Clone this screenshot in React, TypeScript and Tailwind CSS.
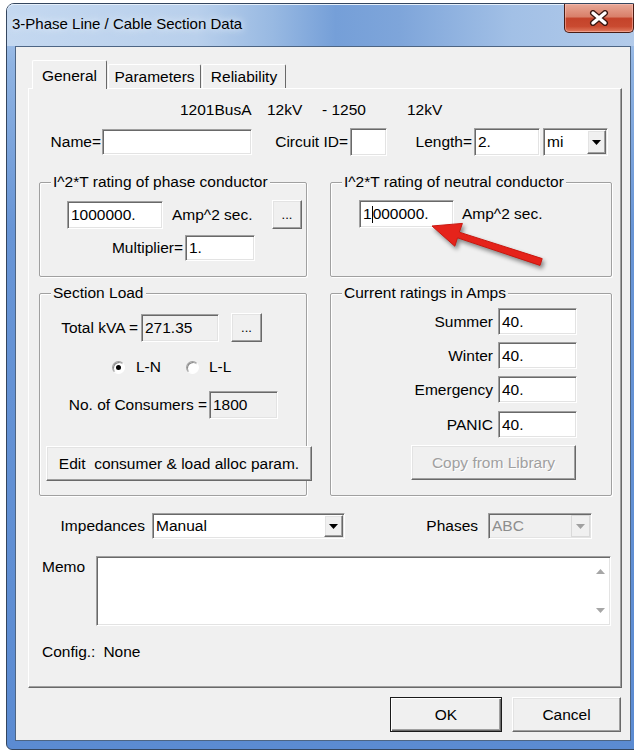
import React from "react";

// classic win32 control bevels
const sunken =
  "border border-t-[#a0a0a0] border-l-[#a0a0a0] border-r-white border-b-white shadow-[inset_1px_1px_0_#696969,inset_-1px_-1px_0_#e3e3e3]";
const raised =
  "border border-t-white border-l-white border-r-[#696969] border-b-[#696969] shadow-[inset_-1px_-1px_0_#a0a0a0,inset_1px_1px_0_#e3e3e3] bg-[#f0f0f0]";

type FieldProps = { className?: string; gray?: boolean; children?: React.ReactNode };

function Field({ className = "", gray = false, children }: FieldProps) {
  return (
    <div
      className={`${sunken} ${gray ? "bg-[#f0f0f0]" : "bg-white"} flex items-center pl-[3px] whitespace-nowrap ${className}`}
    >
      {children}
    </div>
  );
}

function Arrow({ disabled = false }: { disabled?: boolean }) {
  return (
    <svg width="9" height="5" viewBox="0 0 9 5">
      <polygon points="0,0 9,0 4.5,5" fill={disabled ? "#a0a0a0" : "#000"} />
    </svg>
  );
}

function Combo({ value, className = "", disabled = false }: { value: string; className?: string; disabled?: boolean }) {
  return (
    <div
      className={`${sunken} ${disabled ? "bg-[#f0f0f0] text-[#8d8d8d]" : "bg-white"} flex items-stretch pl-[3px] ${className}`}
    >
      <span className="flex-1 flex items-center">{value}</span>
      <div
        className={`${
          disabled
            ? "border border-[#d9d9d9] bg-[#f0f0f0]"
            : raised
        } w-[19px] my-[1px] mr-[1px] flex items-center justify-center`}
      >
        <Arrow disabled={disabled} />
      </div>
    </div>
  );
}

function Button({ className = "", children, disabled = false, primary = false }: { className?: string; children: React.ReactNode; disabled?: boolean; primary?: boolean }) {
  return (
    <div
      className={`${
        primary
          ? "border border-[#1a1a1a] bg-[#f0f0f0] shadow-[inset_1px_1px_0_#fff,inset_-1px_-1px_0_#696969,inset_-2px_-2px_0_#a0a0a0]"
          : raised
      } flex items-center justify-center whitespace-pre ${
        disabled ? "text-[#a0a0a0] [text-shadow:1px_1px_0_#fff]" : ""
      } ${className}`}
    >
      {children}
    </div>
  );
}

function Group({ title, className = "", children }: { title: string; className?: string; children: React.ReactNode }) {
  return (
    <fieldset
      className={`min-w-0 shrink-0 border border-[#a0a0a0] rounded-[2px] shadow-[inset_1px_1px_0_#fff,1px_1px_0_#fff] ${className}`}
    >
      <legend className="ml-[11px] px-[2px] bg-[#f0f0f0]">{title}</legend>
      {children}
    </fieldset>
  );
}

function Radio({ checked }: { checked?: boolean }) {
  return (
    <span className="w-[13px] h-[13px] rounded-full border border-t-[#a0a0a0] border-l-[#a0a0a0] border-r-white border-b-white bg-white shadow-[inset_1px_1px_0_#8a8a8a] flex items-center justify-center">
      {checked && <span className="w-[5px] h-[5px] rounded-full bg-black" />}
    </span>
  );
}

function RatingRow({ label, top }: { label: string; top: string }) {
  return (
    <div className={`flex items-center h-[27px] ${top}`}>
      <span className="w-[167px] text-right pr-[5px]">{label}</span>
      <Field className="w-[79px] h-[27px]">40.</Field>
    </div>
  );
}

export default function App() {
  return (
    <div className="w-[634px] h-[751px] overflow-hidden bg-white font-['Liberation_Sans',Arial,sans-serif] text-[15.5px] leading-[18px] text-black">
      {/* window frame */}
      <div className="ml-[6px] mt-[3px] w-[634px] h-[747px] rounded-t-[8px] rounded-b-[6px] border border-[#34465f] bg-[linear-gradient(180deg,#b3cdee_0%,#8fb3e2_8%,#6895d6_30%,#5b8bd2_100%)] flex flex-col">
        {/* title bar */}
        <div className="h-[42px] flex items-start rounded-t-[7px] bg-[linear-gradient(90deg,#c4d8f0_0%,#b9d0ec_30%,#98b9e2_42%,#759fd8_52%,#7ea5da_62%,#a2c0e6_80%,#b3cbea_100%)] shadow-[inset_0_1px_0_#e6f0fb]">
          <span className="ml-[5px] mt-[11px] text-[15px] [text-shadow:0_0_6px_#dfeaf7,0_0_10px_#dfeaf7]">
            3-Phase Line / Cable Section Data
          </span>
          <div className="ml-auto mr-[5px] w-[70px] h-[29px] rounded-b-[5px] border border-t-0 border-[#4a1c14] bg-[linear-gradient(180deg,#e8a897_0%,#d9806a_45%,#c4432a_52%,#c94a30_80%,#e07a5f_100%)] shadow-[inset_0_0_0_1px_rgba(255,200,190,0.5)] flex items-center justify-center">
            <svg width="22" height="16" viewBox="0 0 22 16">
              <path d="M5 3 L17 13 M17 3 L5 13" stroke="#3b1610" strokeWidth="6" strokeLinecap="round" />
              <path d="M5 3 L17 13 M17 3 L5 13" stroke="#fff" strokeWidth="3.4" strokeLinecap="round" />
            </svg>
          </div>
        </div>

        {/* client area */}
        <div className="mx-[8px] h-[695px] border border-[#4d6584] bg-[#f0f0f0] flex flex-col">
          {/* tab strip */}
          <div className="mt-[13px] ml-[16px] h-[29px] -mb-[1px] flex items-end relative z-10">
            <div className="h-[29px] w-[75px] rounded-t-[2px] border border-b-0 border-t-white border-l-white border-r-[#696969] bg-[#f0f0f0] flex items-center justify-center pt-[1px]">
              General
            </div>
            <div className="h-[24px] mb-[1px] w-[93px] ml-[1px] rounded-t-[2px] border border-b-0 border-t-white border-l-white border-r-[#696969] bg-[#f0f0f0] flex items-center justify-center">
              Parameters
            </div>
            <div className="h-[24px] mb-[1px] w-[84px] ml-[1px] rounded-t-[2px] border border-b-0 border-t-white border-l-white border-r-[#696969] bg-[#f0f0f0] flex items-center justify-center">
              Reliability
            </div>
          </div>

          {/* tab page */}
          <div className="ml-[12px] w-[594px] h-[600px] border border-t-white border-l-white border-r-[#696969] border-b-[#696969] shadow-[inset_-1px_-1px_0_#a0a0a0] flex flex-col">
            <div className="mt-[12px] ml-[151px] flex">
              <span className="w-[87px]">1201BusA</span>
              <span className="w-[55px]">12kV</span>
              <span className="w-[85px]">- 1250</span>
              <span>12kV</span>
            </div>

            <div className="mt-[10px] h-[26px] flex items-center">
              <span className="w-[73px] text-right pr-[1px]">Name=</span>
              <Field className="w-[150px] h-[26px]" />
              <span className="w-[98px] text-right pr-[2px]">Circuit ID=</span>
              <Field className="w-[37px] h-[28px]" />
              <span className="w-[87px] text-right pr-[2px]">Length=</span>
              <Field className="w-[66px] h-[28px]">2.</Field>
              <Combo value="mi" className="ml-[3px] w-[65px] h-[28px]" />
            </div>

            <div className="mt-[18px] flex">
              <Group title="I^2*T rating of phase conductor" className="ml-[10px] w-[268px] h-[104px]">
                <div className="mt-[9px] h-[29px] flex items-center">
                  <Field className="ml-[27px] w-[96px] h-[28px]">1000000.</Field>
                  <span className="ml-[9px] w-[100px]">Amp^2 sec.</span>
                  <Button className="w-[30px] h-[29px] text-[13px]">...</Button>
                </div>
                <div className="mt-[6px] h-[26px] flex items-center">
                  <span className="w-[145px] text-right pr-[2px]">Multiplier=</span>
                  <Field className="w-[70px] h-[26px]">1.</Field>
                </div>
              </Group>

              <Group title="I^2*T rating of neutral conductor" className="ml-[23px] w-[282px] h-[104px]">
                <div className="mt-[9px] h-[28px] flex items-center relative">
                  <Field className="ml-[28px] w-[95px] h-[28px]">
                    1<span className="w-[1px] h-[17px] bg-black" />000000.
                  </Field>
                  <span className="ml-[8px]">Amp^2 sec.</span>
                  <svg
                    className="absolute left-0 top-0 overflow-visible drop-shadow-[2px_3px_2px_rgba(0,0,0,0.45)]"
                    width="220"
                    height="70"
                    viewBox="0 0 220 70"
                  >
                    <polygon
                      points="101,26 131.4,23.4 128.3,32.2 211.2,58.6 209,65.4 126.5,37.8 123.8,46.2"
                      fill="#e5231b"
                      stroke="#c81810"
                      strokeWidth="1"
                      strokeLinejoin="round"
                    />
                  </svg>
                </div>
              </Group>
            </div>

            <div className="mt-[7px] flex">
              <Group title="Section Load" className="ml-[10px] w-[268px] h-[212px]">
                <div className="mt-[11px] h-[29px] flex items-center">
                  <span className="w-[101px] text-right pr-[3px]">Total kVA =</span>
                  <Field gray className="w-[78px] h-[28px]">271.35</Field>
                  <Button className="ml-[12px] w-[31px] h-[29px] text-[13px]">...</Button>
                </div>
                <div className="mt-[16px] h-[18px] flex items-center">
                  <span className="ml-[72px]">
                    <Radio checked />
                  </span>
                  <span className="ml-[11px]">L-N</span>
                  <span className="ml-[25px]">
                    <Radio />
                  </span>
                  <span className="ml-[10px]">L-L</span>
                </div>
                <div className="mt-[15px] h-[28px] flex items-center">
                  <span className="w-[169px] text-right pr-[2px]">No. of Consumers =</span>
                  <Field gray className="w-[69px] h-[28px]">1800</Field>
                </div>
                <Button className="mt-[27px] ml-[6px] w-[266px] h-[35px]">Edit  consumer &amp; load alloc param.</Button>
              </Group>

              <Group title="Current ratings in Amps" className="ml-[23px] w-[282px] h-[212px]">
                <RatingRow label="Summer" top="mt-[6px]" />
                <RatingRow label="Winter" top="mt-[7px]" />
                <RatingRow label="Emergency" top="mt-[7px]" />
                <RatingRow label="PANIC" top="mt-[8px]" />
                <Button disabled className="mt-[7px] ml-[80px] w-[165px] h-[35px]">
                  Copy from Library
                </Button>
              </Group>
            </div>

            <div className="mt-[17px] h-[26px] flex items-center">
              <span className="w-[121px] text-right pr-[5px]">Impedances</span>
              <Combo value="Manual" className="ml-[2px] w-[193px] h-[26px]" />
              <span className="w-[143px] text-right pr-[10px]">Phases</span>
              <Combo value="ABC" disabled className="w-[104px] h-[26px]" />
            </div>

            <div className="mt-[17px] h-[70px] flex">
              <span className="w-[67px] pl-[13px] pt-[2px]">Memo</span>
              <div className={`${sunken} bg-white w-[515px] h-[70px] flex justify-end`}>
                <div className="w-[20px] flex flex-col items-center justify-between py-[12px]">
                  <svg width="9" height="5" viewBox="0 0 9 5">
                    <polygon points="0,5 9,5 4.5,0" fill="#a6a6a6" />
                  </svg>
                  <svg width="9" height="5" viewBox="0 0 9 5">
                    <polygon points="0,0 9,0 4.5,5" fill="#a6a6a6" />
                  </svg>
                </div>
              </div>
            </div>

            <div className="mt-[17px] ml-[13px] flex">
              <span>Config.:</span>
              <span className="ml-[8px]">None</span>
            </div>
          </div>

          {/* dialog buttons */}
          <div className="mt-[9px] pr-[9px] flex justify-end gap-[10px]">
            <Button primary className="w-[112px] h-[35px]">OK</Button>
            <Button className="w-[109px] h-[35px]">Cancel</Button>
          </div>
        </div>
      </div>
    </div>
  );
}
